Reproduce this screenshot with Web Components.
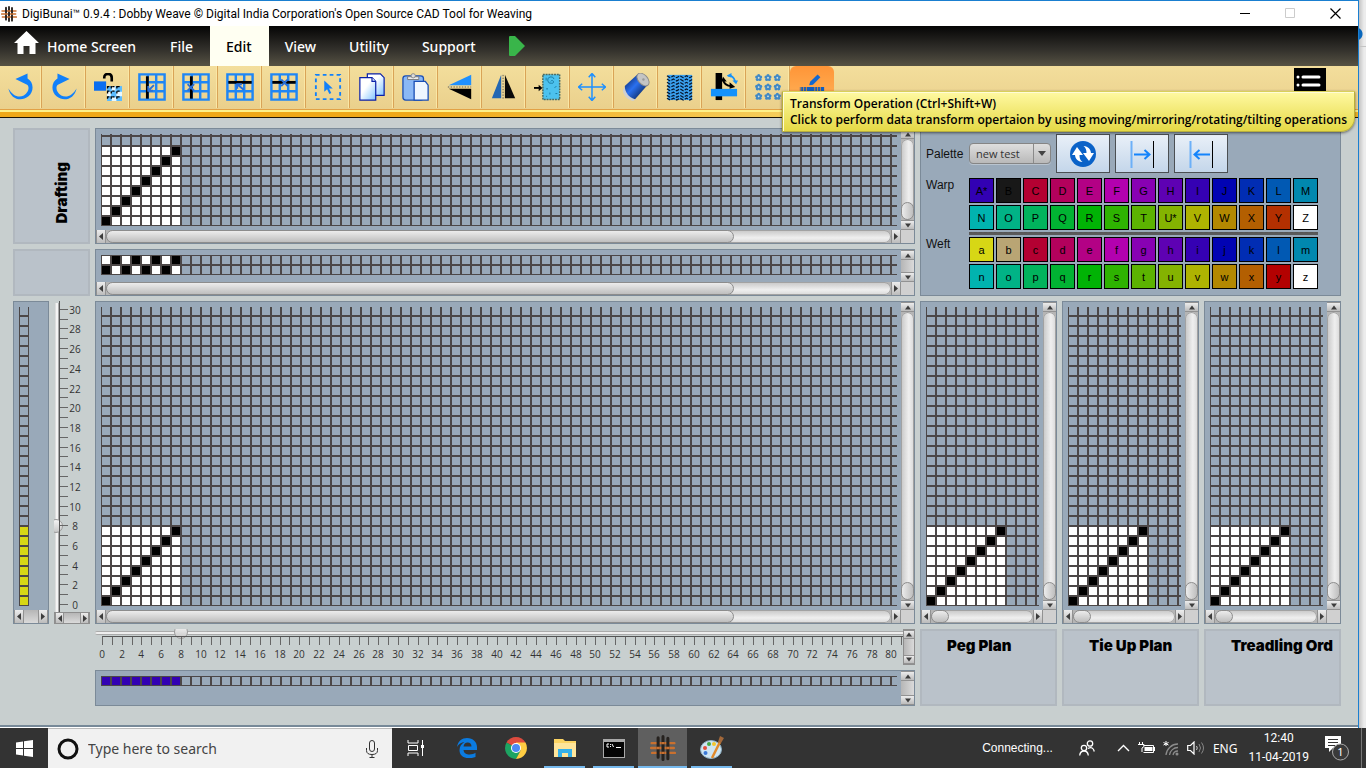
<!DOCTYPE html>
<html lang="en">
<head>
<meta charset="utf-8">
<title>DigiBunai - Dobby Weave</title>
<style>
html,body{margin:0;height:100%}
body{display:flex;flex-direction:column;min-height:100vh;overflow:hidden;background:radial-gradient(circle at calc(100% - 10px) 34px,#0a68bd 6px,transparent 7px),linear-gradient(#c4c4c4,#c4c4c4) 0 46px/100% 1px no-repeat,linear-gradient(90deg,#e8e8e8 calc(100% - 7px),#c4c4c4 calc(100% - 7px),#ececec calc(100% - 2px));font-family:"Noto Sans","Open Sans",sans-serif;color:#000}
app-window{flex:1}
</style>
</head>
<body>
<app-window></app-window>
<task-bar></task-bar>
<script>
const define = (name, html) => customElements.define(name, class extends HTMLElement {
  connectedCallback() {
    if (this.shadowRoot) return;
    const root = this.attachShadow({ mode: 'open' });
    const t = document.createElement('template');
    t.innerHTML = typeof html === 'function' ? html(this) : html;
    root.append(t.content.cloneNode(true));
  }
});

/* ---------- shared drawings ---------- */
const WEAVE = `<g fill="none" stroke-linecap="round"><path d="M1.500 7.500h21M1 12h21M2 16.500h21" stroke="#c9702f" stroke-width="2.200"/><path d="M7.500 2.500v18M12 1.500v21M16.500 3v19" stroke="#26221f" stroke-width="2.800"/><path d="M6 12h3M10.500 7.500h3M10.500 16.500h3M15 12h3" stroke="#c9702f" stroke-width="2.200" stroke-linecap="butt"/></g>`;
const hash = '<path d="M1.500 1.500h27v27h-27zM10.500 1.500v27M19.500 1.500v27M1.500 10h27M1.500 19.500h27" fill="none" stroke="#1f86f5" stroke-width="2.600"/>';
const flower = (x, y) => `<g transform="translate(${x} ${y})" fill="#4089c6"><circle cy="-2.100" r="1.700"/><circle cx="2.100" cy="-.6" r="1.700"/><circle cx="1.400" cy="2" r="1.700"/><circle cx="-1.400" cy="2" r="1.700"/><circle cx="-2.100" cy="-.6" r="1.700"/><circle r=".9" fill="#cfe0e4"/></g>`;
const chevrons = [3, 6.500, 10, 13.500, 17, 20.500, 24, 27].map(y => `M1 ${y}l3.500 2 3.500-2 3.500 2 3.500-2 3.500 2 3.500-2 3.500 2 2.500-1.500`).join('');
const arc = '<path d="M9 6.500L22 .5V6c7 4 7 14 1 19-8 6.500-19 3-21.500-8.500C6 24 12 27 18 24c6-3.500 6-10 3.500-11.500z" fill="#1180fa"/>';
const ICONS = {
  undo: arc,
  redo: `<g transform="matrix(-1 0 0 1 30 0)">${arc}</g>`,
  unlock: '<path d="M11 6V5q0-4 4-4t4 4v4" fill="none" stroke="#000" stroke-width="2.800"/><path d="M0 9h13v10H0z" fill="#0a6ef0"/><path d="M14 14h16v16H14z" fill="#5bbcff"/><path d="M19 14h4v5h-4zM24 20h6v5h-6zM14 20h4v5h-4zM19 26h5v4h-5z" fill="#e9f8ff"/><path d="M14 14.500h16M14 19.500h16M14 25.500h16M18.500 14v16M24.500 14v16M14.500 14v16" stroke="#000" stroke-width="1.400" stroke-dasharray="2.500 3" fill="none"/>',
  vin: hash + '<path d="M10 3.500v24" stroke="#000" stroke-width="3"/><path d="M17 13l-6 6M11 14v5h5" stroke="#2b6fd6" stroke-width="2" fill="none"/>',
  vdel: hash + '<path d="M10 3.500v24" stroke="#000" stroke-width="3"/><path d="M6 12l7 7M13 12l-7 7" stroke="#2b6fd6" stroke-width="2"/>',
  hin: hash + '<path d="M2.500 10h25" stroke="#000" stroke-width="3"/><path d="M19 18l-7-6M12 17v-5h5" stroke="#2b6fd6" stroke-width="2" fill="none"/>',
  hdel: hash + '<path d="M2.500 10h25" stroke="#000" stroke-width="3"/><path d="M12 7l7 7M19 7l-7 7" stroke="#2b6fd6" stroke-width="2"/>',
  select: '<path d="M2 2h26v26H2z" fill="none" stroke="#1180fa" stroke-width="2" stroke-dasharray="4 3.400"/><path d="M11 8v12l3-2.500 2.500 5 2-1-2.400-4.800h4z" fill="#1180fa"/>',
  copy: '<defs><linearGradient id="a" x2="1" y2="1"><stop offset=".4" stop-color="#fff"/><stop offset="1" stop-color="#7fc4ff"/></linearGradient></defs><g stroke="#0a1fa8" stroke-width="1.300" fill="url(#a)"><path d="M10 1h14l4 4v19H10z"/><path d="M2 5h13l4 4v20H2z"/><path d="M15 5v4h4"/></g>',
  paste: '<rect x="1" y="3" width="22" height="26" rx="3" fill="#8ab8f6" stroke="#1b4fb5" stroke-width="1.400"/><path d="M6 4h12v3H6z" fill="#eee" stroke="#777"/><circle cx="12" cy="3" r="2.300" fill="#ddd" stroke="#888"/><path d="M13 9h12l3 4v16H13z" fill="#eef6ff" stroke="#1b4fb5" stroke-width="1.400"/>',
  vmir: '<path d="M27 2v11H3z" fill="#1e90ff"/><path d="M27 28V17H3z" fill="#000"/><path d="M2 15h25" stroke="#555" stroke-dasharray="1.500 1.500"/>',
  hmir: '<path d="M12 2v25H2z" fill="#2367b3"/><path d="M16 2v25h11z" fill="#0a0a0a"/><path d="M14 2v26" stroke="#555" stroke-dasharray="1.500 1.500"/>',
  fit: '<path d="M9.500 1.500h18v27h-18z" fill="#4cc2ee" stroke="#4b6a60" stroke-width="1.600" stroke-dasharray="2 1"/><path d="M18 9a1.500 1.500 0 1 1 1 2 3.500 3.500 0 1 1 2.500-4.500M13 5v3M24 14l-2 2M13 17h2M17 21v2M23 22h2M13 25h1" stroke="#1a7aa0" fill="none"/><path d="M0 16h6" stroke="#000" stroke-width="2"/><path d="M5 12.500l4 3.500-4 3.500z"/>',
  move: '<path d="M15 0v30M0 15h30M11.500 4.500L15 .5l3.500 4M11.500 25.500l3.500 4 3.500-4M4.500 11.500L.5 15l4 3.500M25.500 11.500l4 3.500-4 3.500" fill="none" stroke="#1e90ff" stroke-width="1.600"/>',
  spool: '<defs><linearGradient id="b" x2="1" y2="1"><stop offset="0" stop-color="#051848"/><stop offset=".45" stop-color="#2a70f0"/><stop offset="1" stop-color="#020a20"/></linearGradient></defs><path d="M1 18l3-4 11 14-3 2C6 29 1 24 1 18z" fill="#d0d0d0"/><path d="M3 14L17 1l11 11-14 16C8 27 3 21 3 14z" fill="url(#b)"/><ellipse cx="22.500" cy="7" rx="5" ry="8" transform="rotate(-42 22.500 7)" fill="#c4c4c4" stroke="#8a8a8a"/><circle cx="23" cy="7" r="1.300" fill="#999"/>',
  fabric: `<path d="M2 2h26v27H2z" fill="#3aa0ee"/><path d="${chevrons}" fill="none" stroke="#06152c" stroke-width="1.300" stroke-dasharray="4 1.500"/>`,
  rotate: '<path d="M6 0h7v29H6z"/><path d="M1 17h28v8H1z" fill="#1592fb"/><path d="M14 7c1 5 5 7 9 7" fill="none" stroke="#000" stroke-width="2"/><path d="M21 10l6 5-6 2zM12 9l2-5 4 5z"/><path d="M19 3c4-1 7 2 8 6" stroke="#1592fb" stroke-width="2" fill="none"/><path d="M18 3l5-3v5zM24 8h6l-2 4z" fill="#1592fb"/>',
  pattern: [5, 15, 25].map(y => [5, 15, 25].map(x => flower(x, y)).join('')).join(''),
  transform: '<path d="M12 13l1-3.500L21 1.500l3 3-8 8z" fill="#1468d0"/><path d="M2 15h26v9H2z" fill="#125ec0"/><path d="M3 15v6M6 15v6M9 15v6M18 15v6M21 15v6M24 15v6" stroke="#e08a30"/>'
};

/* ---------- scroll bar ---------- */
define('scroll-bar', el => {
  const v = el.hasAttribute('vertical'), th = el.getAttribute('thumb');
  return `<style>
:host{display:flex;flex-direction:${v ? 'column' : 'row'};min-width:0;min-height:0;overflow:hidden;background:#b5b5b5}
:host([framed]){border:1px solid #8e8e8e}
button{flex:0 0 ${el.hasAttribute('framed') ? 9 : 10}px;margin:0;padding:0;border:solid #929292;border-width:${v ? '1px 0' : '0 1px'};background:linear-gradient(#ececec,#bcbcbc);display:flex;align-items:center;justify-content:center}
svg{display:block;flex:none}
.track{flex:1;min-width:0;min-height:0;display:flex;flex-direction:inherit;box-sizing:border-box;justify-content:${el.hasAttribute('end') ? 'flex-end' : 'flex-start'};background:linear-gradient(${v ? 90 : 180}deg,${th ? '#c6c6c6,#efefef 60%,#d8d8d8' : '#b6b6b6,#dadada'});${th ? 'box-shadow:inset 0 0 0 1px #a2a2a2;border-radius:7px' : ''}}
.thumb{flex:0 0 ${th || 0};box-sizing:border-box;border:1px solid #8c8c8c;border-radius:7px;background:linear-gradient(${v ? 90 : 180}deg,#ececec,#bebebe)}
</style><button aria-label="Scroll back"><svg width="6" height="7"><path d="${v ? 'M0 5.500h6L3 1.500z' : 'M5 0v7L1 3.500z'}" fill="#3c3c3c"/></svg></button><div class="track">${th ? '<div class="thumb"></div>' : ''}</div><button aria-label="Scroll on"><svg width="6" height="7"><path d="${v ? 'M0 1.500h6L3 5.500z' : 'M1 0v7l4-3.500z'}" fill="#3c3c3c"/></svg></button>`;
});

/* ---------- point paper grid: rows count upward from the bottom edge ---------- */
define('weave-grid', el => {
  const fill = el.getAttribute('fill'), kind = el.getAttribute('pattern');
  const cell = (c, r, col) => `<rect x="${c * 10}" y="${-(r + 1) * 10}" width="10" height="10" fill="${col}"/>`;
  let cells = '';
  const rows = { twill: 8, plain: 2, row: 1, column: 8 }[kind], cols = kind === 'column' ? 1 : 8;
  for (let r = 0; r < rows; r++) for (let c = 0; c < cols; c++)
    cells += cell(c, r, fill || ((kind === 'twill' ? r === c : (r + c) % 2 === 0) ? '#000' : '#fff'));
  const w = el.getAttribute('w'), h = el.getAttribute('h');
  return `<style>:host{display:block;overflow:hidden;width:${w ? w + 'px' : '100%'};height:${h ? h + 'px' : '100%'}}svg{display:block;width:100%;height:100%}.anchor{overflow:visible}</style>
<svg aria-hidden="true"><defs><pattern id="p" width="10" height="10" patternUnits="userSpaceOnUse"><path d="M0 0h10v1H0zM0 9h10v1H0zM0 0h1v10H0zM9 0h1v10H9z" fill="#4c4747"/></pattern></defs>
<svg class="anchor" y="100%" width="100%" height="100%">${cells}<rect y="-3000" width="100%" height="3000" fill="url(#p)"/></svg></svg>`;
});

/* ---------- sunken panel with optional scroll bars ---------- */
define('weave-panel', el => {
  const hb = el.getAttribute('hbar'), vb = el.getAttribute('vbar');
  const bar = (k, val) => `<scroll-bar ${k} ${val !== 'none' ? `thumb="${val}"` : ''}></scroll-bar>`;
  return `<style>
:host{display:grid;box-sizing:border-box;min-width:0;min-height:0;border:1px solid #7b8a98;background:#99a9b9;grid-template:minmax(0,1fr) ${hb ? '13px' : ''} / minmax(0,1fr) ${vb ? '13px' : ''}}
.view{padding:5px 4px 4px 5px;overflow:hidden;min-width:0;min-height:0}
.corner{background:#d0d0d0}
</style><div class="view"><slot></slot></div>${vb ? bar('vertical end', vb) : ''}${hb ? bar('', hb) : ''}${hb && vb ? '<div class="corner"></div>' : ''}`;
});

define('label-panel', `<style>
:host{display:block;box-sizing:border-box;min-width:0;border:2px solid #b1b8bf;background:#bac2ca;font:900 15px/24px Inter,"Liberation Sans",sans-serif;color:#000;padding:3px 0 0 25px;overflow:hidden;white-space:nowrap}
:host([turned]){display:flex;align-items:center;justify-content:center;padding:14px 0 0 20px}
:host([turned]) span{writing-mode:vertical-rl;transform:rotate(180deg)}
</style><span><slot></slot></span>`);

/* ---------- rulers with slider ---------- */
const slider = `input{appearance:none;-webkit-appearance:none;display:block;margin:0;background:none}
input::-webkit-slider-thumb{-webkit-appearance:none;width:14px;height:14px;border-radius:50%;border:1px solid #9a9a9a;background:linear-gradient(#f4f4f4,#c8c8c8)}`;
define('width-ruler', () => {
  let s = '';
  for (let i = 0; i <= 81; i++) {
    const x = Math.round(7 + i * 9.866);
    s += `<path d="M${x}.5 1v8" stroke="#666"/>`;
    if (i % 2 === 0) s += `<text x="${x}" y="22" text-anchor="middle">${i}</text>`;
  }
  return `<style>
:host{display:grid;grid-template-columns:minmax(0,1fr) 12px;overflow:hidden;height:36px}
.view{overflow:hidden;min-width:0}
${slider}
input{width:813px;height:7px}
input::-webkit-slider-runnable-track{height:4px;border-radius:3px;background:#eee;border-top:1px solid #aaa;border-bottom:1px solid #aaa}
input::-webkit-slider-thumb{margin-top:-7px}
svg{display:block;width:100%;height:28px;font:10px "Open Sans",sans-serif}
text{fill:#333}
</style><div class="view"><input type="range" min="0" max="81" value="8" aria-label="Number of ends"><svg><path d="M7 .5h2000" stroke="#555"/>${s}</svg></div><scroll-bar vertical framed></scroll-bar>`;
});
define('height-ruler', () => {
  let s = '';
  for (let i = 0; i <= 30; i++) {
    const y = Math.round(i * -9.84) - 7;
    s += `<path d="M0 ${y}.5h8" stroke="#666"/>`;
    if (i % 2 === 0) s += `<text x="15" y="${y + 4}" text-anchor="middle">${i}</text>`;
  }
  return `<style>
:host{display:grid;grid-template-rows:minmax(0,1fr) 12px;height:100%;overflow:hidden}
.view{display:flex;overflow:hidden;min-height:0;align-items:flex-end}
${slider}
input{writing-mode:vertical-lr;direction:rtl;width:5px;height:309px;flex:none}
input::-webkit-slider-runnable-track{width:4px;border-left:1px solid #ddd;border-right:1px solid #aaa;background:#f4f4f4}
input::-webkit-slider-thumb{margin-left:-7px}
svg{display:block;flex:1;height:100%;overflow:hidden;font:10px "Open Sans",sans-serif;border-left:1px solid #555}
.anchor{overflow:visible}
text{fill:#333}
</style><div class="view"><input type="range" min="0" max="30" value="8" aria-label="Number of picks"><svg><svg class="anchor" y="100%">${s}</svg></svg></div><scroll-bar framed></scroll-bar>`;
});

/* ---------- palette ---------- */
define('palette-panel', () => {
  const cols = '#3201b3 #181818 #b30132 #b3015c #b30185 #b301af #8801b3 #5e01b3 #3501b3 #0103b3 #012db3 #0159b3 #0188af #01b3af #01b386 #01b35d #01b333 #01b305 #2eb301 #5cb301 #84b301 #aeb301 #b38801 #b35f01 #b33001 #ffffff'.split(' ');
  const weft = cols.slice(); weft[0] = '#d7d715'; weft[1] = '#b9a574'; weft[24] = '#b30101';
  const set = (list, base) => list.map((c, i) => {
    const ch = String.fromCharCode(base + i);
    return `<button style="background:${c}">${ch}${base === 65 && (i === 0 || i === 20) ? '*' : ''}</button>`;
  }).join('');
  return `<style>
:host{display:grid;box-sizing:border-box;grid-template-columns:38px 349px;column-gap:5px;align-content:start;padding:5px;border:1px solid #7b8a98;background:#99a9b9;font:12px/14px "Liberation Sans",Arial,sans-serif;color:#111}
label,.name{align-self:start}
label{padding-top:13px}
.tools{display:flex;gap:5px;height:39px;margin-bottom:5px}
select{appearance:none;-webkit-appearance:none;box-sizing:border-box;width:82px;height:21px;margin:9px 0 0;padding:1px 0 0 6px;border:1px solid #858585;border-radius:4px;font:11px/18px "Open Sans",sans-serif;color:#333;box-shadow:0 1px #b9c4cf;background:url('data:image/svg+xml,<svg xmlns="http://www.w3.org/2000/svg" width="17" height="19"><path d="M.5 0v19" stroke="%238a8a8a"/><path d="M5 7h8l-4 5z" fill="%23444"/></svg>') right center no-repeat,linear-gradient(#dedede,#b9b9b9)}
.tools button{box-sizing:border-box;width:54px;height:39px;padding:0;border:1px solid #4b4f53;background:linear-gradient(#e9f0f8,#c4d6ea);display:flex;align-items:center;justify-content:center}
.set{display:grid;grid-template-columns:repeat(13,25px);gap:2px}
.set button{box-sizing:border-box;height:25px;padding:0;border:1px solid #000;font:11px/12px "Liberation Sans",Arial,sans-serif;color:#000}
.line{grid-column:2;height:2px;margin:2px 0;border-top:1px dashed #555;background:#5a5a5a}
</style>
<label for="pal">Palette</label><div class="tools"><select id="pal"><option>new test</option></select>
<button aria-label="Swap palettes"><svg width="28" height="28"><circle cx="14" cy="14" r="13" fill="#0a62c8"/><path d="M3 15l5-8 6 8h-3.500c0 3 .5 5 3 7-5-.5-7-3-7.500-7zM25 13l-5 8-6-8h3.500c0-3-.5-5-3-7 5 .5 7 3 7.500 7z" fill="#fff"/></svg></button>
<button aria-label="Warp to weft"><svg width="26" height="28"><path d="M2.500 1v27" stroke="#6cb0f8" stroke-width="2"/><path d="M24.500 1v27" stroke="#000"/><path d="M5 14.500h15M15.500 10l5 4.500-5 4.500" fill="none" stroke="#1484fb" stroke-width="2"/></svg></button>
<button aria-label="Weft to warp"><svg width="26" height="28"><path d="M2.500 1v27" stroke="#6cb0f8" stroke-width="2"/><path d="M24.500 1v27" stroke="#000"/><path d="M22 14.500H7M11.500 10l-5 4.500 5 4.500" fill="none" stroke="#1484fb" stroke-width="2"/></svg></button></div>
<span class="name">Warp</span><div class="set">${set(cols, 65)}</div><div class="line"></div><span class="name">Weft</span><div class="set">${set(weft, 97)}</div>`;
});

/* ---------- tool bar ---------- */
define('tool-button', el => `<style>
:host{display:block;width:44px;flex:none}
:host(:first-child){width:42px}
button{box-sizing:border-box;width:100%;height:42px;margin:0;padding:0;border:0;border-right:1px solid #d9a457;box-shadow:inset -1px 0 #fae7a5;background:none;display:flex;align-items:center;justify-content:center}
:host([active]) button{border:0;border-radius:6px 6px 0 0;box-shadow:none;background:linear-gradient(#ff9537,#ffa94e 60%,#ffd070)}
svg{display:block}
</style><button aria-label="${el.getAttribute('label')}"><svg width="28" height="28" viewBox="0 0 30 30">${ICONS[el.getAttribute('icon')]}</svg></button>`);

define('hover-tip', `<style>
:host{display:block;box-sizing:border-box;padding:4px 7px 3px;border:1px solid #b9b03c;border-top-color:#d9d05a;border-radius:1px 1px 14px 1px;background:linear-gradient(#fff9a2,#e5d946);box-shadow:inset 1px 1px #fffcd8,0 1px 3px #0008;font:600 12px/16px "Open Sans",sans-serif;white-space:nowrap}
</style><slot></slot>`);

/* ---------- application window ---------- */
const tools = [['undo','Undo'],['redo','Redo'],['unlock','Unlock'],['vin','Insert warp'],['vdel','Delete warp'],['hin','Insert weft'],['hdel','Delete weft'],['select','Select'],['copy','Copy'],['paste','Paste'],['vmir','Mirror vertical'],['hmir','Mirror horizontal'],['fit','Fill'],['move','Move'],['spool','Yarn'],['fabric','Fabric'],['rotate','Rotate'],['pattern','Repeat'],['transform','Transform']];
define('app-window', () => `<style>
:host{display:flex;flex-direction:column;position:relative;min-height:0;margin-right:7px;border-top:1px solid #1a7fd0;border-right:1px solid #1a7fd0;background:#c8cfcf}
header{display:flex;align-items:center;height:25px;flex:none;background:#fff;font:12px Roboto,"Open Sans",sans-serif;padding-left:1px;white-space:nowrap}
header>svg{margin-right:5px}
header .win{display:flex;margin-left:auto}
header button{width:45px;height:25px;padding:0;border:0;background:none;display:flex;align-items:center;justify-content:center}
nav{display:flex;height:40px;flex:none;background:linear-gradient(#050505,#33312c 60%,#565243);padding-left:14px}
nav a{display:flex;align-items:center;padding:0 17px 0 16px;color:#fff;text-decoration:none;font-size:14px;font-weight:500}
nav a:first-child{padding:0 18px 0 0;gap:8px}
nav a:first-child svg{margin-bottom:8px}
nav a.on{background:#fffff2;color:#000}
.tools{display:flex;height:43px;flex:none;background:linear-gradient(#f3de9c,#ead08c)}
.tools .menu{width:32px;height:32px;margin:2px 32px 0 auto;padding:0;border:0;background:#000}
.stripe{height:9px;flex:none;box-sizing:border-box;border-top:1px solid #e2a145;border-bottom:1px solid #1c1405;background:linear-gradient(#fdf08a 2px,transparent 2px),linear-gradient(90deg,#f0a818,#f0a818 30%,#f6d060 60%,#f0b428)}
hover-tip{position:absolute;top:90px;right:3px;z-index:2}
main{flex:1;min-height:0;display:grid;grid-template:116px 47px minmax(0,1fr) 77px / 77px minmax(0,1fr) 421px;gap:5px;padding:10px 17px 19px 13px;border-bottom:2px solid #778998;box-shadow:0 1px #fff;margin-bottom:1px}
palette-panel{grid-column:3;grid-row:1/3}
.split{display:grid;grid-template-columns:minmax(0,1fr) minmax(0,1fr);gap:5px;min-height:0}
.stack{display:grid;grid-template-rows:36px 36px;gap:5px;min-width:0}
.thirds{display:grid;grid-template-columns:repeat(3,minmax(0,1fr));gap:5px;min-height:0}
</style>
<header><svg width="16" height="16" viewBox="0 0 24 24">${WEAVE}</svg><span>DigiBunai™ 0.9.4 : Dobby Weave © Digital India Corporation's Open Source CAD Tool for Weaving</span>
<div class="win"><button aria-label="Minimize"><svg width="11" height="11"><path d="M0 5.500h10" stroke="#000"/></svg></button><button aria-label="Maximize"><svg width="11" height="11"><path d="M.5.5h9v9h-9z" fill="none" stroke="#ccc"/></svg></button><button aria-label="Close"><svg width="11" height="11"><path d="M.5.5l10 10M10.500.5l-10 10" stroke="#000" stroke-width="1.200"/></svg></button></div></header>
<nav><a href="#home"><svg width="25" height="23"><path d="M12.500 0L25 12h-3.500v11h-6v-8h-6v8h-6V12H0z" fill="#fff"/></svg>Home Screen</a><a href="#file">File</a><a href="#edit" class="on">Edit</a><a href="#view">View</a><a href="#utility">Utility</a><a href="#support">Support</a><a href="#run" aria-label="Run"><svg width="17" height="20"><path d="M0 1q0-1 1-1h5l10 10L6 20H1q-1 0-1-1z" fill="#39b54a"/></svg></a></nav>
<div class="tools">${tools.map(t => `<tool-button icon="${t[0]}" label="${t[1]}" ${t[0] === 'transform' ? 'active' : ''}></tool-button>`).join('')}<button class="menu" aria-label="Menu"><svg width="32" height="32"><path d="M9 9h16M9 17h16M9 25h16" stroke="#fff" stroke-width="3" stroke-linecap="round"/><circle cx="4" cy="9" r="1.500" fill="#fff"/><circle cx="4" cy="17" r="1.500" fill="#fff"/><circle cx="4" cy="25" r="1.500" fill="#fff"/></svg></button></div>
<div class="stripe"></div>
<hover-tip>Transform Operation (Ctrl+Shift+W)<br>Click to perform data transform opertaion by using moving/mirroring/rotating/tilting operations</hover-tip>
<main>
<label-panel turned>Drafting</label-panel>
<weave-panel hbar="80%" vbar="18px"><weave-grid pattern="twill"></weave-grid></weave-panel>
<palette-panel></palette-panel>
<label-panel></label-panel>
<weave-panel hbar="80%" vbar="none"><weave-grid pattern="plain" h="20"></weave-grid></weave-panel>
<div class="split"><weave-panel hbar="none"><weave-grid pattern="column" fill="#d7d715" w="10"></weave-grid></weave-panel><height-ruler></height-ruler></div>
<weave-panel hbar="80%" vbar="18px"><weave-grid pattern="twill"></weave-grid></weave-panel>
<div class="thirds">${'<weave-panel hbar="18px" vbar="18px"><weave-grid pattern="twill"></weave-grid></weave-panel>'.repeat(3)}</div>
<div></div>
<div class="stack"><width-ruler></width-ruler><weave-panel vbar="none"><weave-grid pattern="row" fill="#3201b3" h="10"></weave-grid></weave-panel></div>
<div class="thirds"><label-panel>Peg Plan</label-panel><label-panel>Tie Up Plan</label-panel><label-panel>Treadling Ord</label-panel></div>
</main>`);

/* ---------- task bar ---------- */
define('task-bar', `<style>
:host{display:flex;height:40px;flex:none;background:#333;color:#fff;font-size:12px}
button{box-sizing:border-box;margin:0;padding:0;border:0;background:none;color:inherit;font:inherit;display:flex;align-items:center;justify-content:center}
.start,.app{width:48px}
.app{width:49px;padding:0 4px}
.app.view{width:50px;padding:0 6px 0 4px}
.app span{display:flex;width:100%;height:40px;box-sizing:border-box;align-items:center;justify-content:center}
.app.open span{border-bottom:2px solid #76b9ed;padding-top:2px}
.app.on{padding:0}
.app.on span{background:#5f5f5f}
label{display:flex;align-items:center;width:344px;box-sizing:border-box;padding:0 13px 0 9px;background:#f1f1f1;border-top:1px solid #bbb;gap:9px}
input{flex:1;min-width:0;border:0;padding:0;background:none;font:14px "Noto Sans","Open Sans",sans-serif;color:#444}
input::placeholder{color:#444;opacity:1}
.tray{margin-left:auto;display:flex;align-items:center}
.net{font:12px "Liberation Sans",Arial,sans-serif;margin-right:26px}
.tray svg{margin-right:8px}
.tray .people{margin-right:22px}
.clock{text-align:center;font:12px/19px Roboto,sans-serif;margin:0 15px 0 11px}
.tray .note{margin:0 11px 0 0}
.edge{width:1px;height:40px;background:#777;margin-right:4px}
</style>
<button class="start" aria-label="Start"><svg width="17" height="17"><path d="M0 2.500L7 1.500V8H0zM8 1.300L17 0v8H8zM0 9h7v6.500L0 14.500zM8 9h9v8L8 15.700z" fill="#fff"/></svg></button>
<label><svg width="22" height="22"><circle cx="11" cy="11" r="9" fill="none" stroke="#111" stroke-width="3"/></svg><input aria-label="Search" placeholder="Type here to search"><svg width="14" height="18"><rect x="4.500" y=".5" width="5" height="11" rx="2.500" fill="none" stroke="#333"/><path d="M1.500 8v2.500q0 4 5.500 4t5.500-4V8M7 14.500V17M4.500 17.500h5" fill="none" stroke="#333"/></svg></label>
<button class="app view" aria-label="Task view"><span><svg width="18" height="16"><path d="M1 0v3h10V0M1 16v-3h10v3M1.500 5.500h9v5h-9zM15.500 0v16" fill="none" stroke="#fff"/><path d="M14 5h3v3h-3z" fill="#fff"/></svg></span></button>
<button class="app" aria-label="Edge"><span><svg width="20" height="20" viewBox="0 0 20 20"><path d="M0 9C1 3 5 0 10 0c6 0 10 4 10 9v3H6.500c.5 3.500 3 4.500 6 4.500 2.500 0 4.500-.7 6-1.700V19c-2 .8-4 1.200-6.500 1.200C6 20.200 2.500 17 2.500 12c0-3.500 2-6.500 5-8C4.500 4.300 1.500 6 0 9zm6.500-.5h8C14.500 6 13 4.500 10.700 4.500 8.300 4.500 7 6 6.500 8.500z" fill="#0b7be0"/></svg></span></button>
<button class="app" aria-label="Chrome"><span><svg width="22" height="22" viewBox="0 0 22 22"><path d="M11 11L1.500 5.500A11 11 0 0 1 20.500 5.500z" fill="#dd4b3e"/><path d="M11 11L1.500 5.500A11 11 0 0 0 11 22l4.500-8z" fill="#1da462"/><path d="M11 11l4.600 2.600L11 22A11 11 0 0 0 20.500 5.500H11z" fill="#ffcd42"/><circle cx="11" cy="11" r="5" fill="#fff"/><circle cx="11" cy="11" r="4" fill="#4a8af4"/></svg></span></button>
<button class="app open" aria-label="File Explorer"><span><svg width="22" height="19"><path d="M0 0h9l2 2h11v16H0z" fill="#fcd462"/><path d="M0 4h22v14H0z" fill="#ffe59a"/><path d="M4 18v-8h14v8h-4v-4H8v4z" fill="#35b1ea"/></svg></span></button>
<button class="app open" aria-label="Command prompt"><span><svg width="22" height="19"><path d="M0 0h22v19H0z" fill="#aaa"/><path d="M1 3h20v15H1z" fill="#050505"/><path d="M6 5H4v3h2M7.500 5v1M7.500 7v1M9 5l1.500 3M13 8.500h5" fill="none" stroke="#fff"/></svg></span></button>
<button class="app open on" aria-label="DigiBunai"><span><svg width="26" height="26" viewBox="0 0 24 24">${WEAVE}</svg></span></button>
<button class="app open" aria-label="Paint"><span><svg width="24" height="24"><ellipse cx="11" cy="13.500" rx="10.500" ry="9" fill="#cfe6f3" stroke="#8fb2c6"/><circle cx="5" cy="12" r="2" fill="#e0503c"/><circle cx="9" cy="8" r="2" fill="#42a847"/><circle cx="14" cy="8" r="2" fill="#f4c62d"/><circle cx="5.500" cy="17" r="2" fill="#3a78d6"/><path d="M12 22L20 6" stroke="#e08a2c" stroke-width="2.500"/><path d="M18 6l2-6 4 2-3 5z" fill="#a3683a"/></svg></span></button>
<div class="tray"><span class="net">Connecting...</span>
<svg class="people" width="16" height="16"><g fill="none" stroke="#fff" stroke-width="1.300"><circle cx="11" cy="3.500" r="2.700"/><circle cx="5" cy="8" r="2.700"/><path d="M.7 15.500q.5-4.500 4.300-4.500t4.300 4.500M9 8.500q5-2.500 6.300 3"/></g></svg>
<svg width="13" height="8"><path d="M1 7l5.500-5.500L12 7" fill="none" stroke="#fff" stroke-width="1.400"/></svg>
<svg width="17" height="12"><path d="M5.500 3.500h10v7h-10" fill="none" stroke="#fff"/><path d="M6.500 5h8v4h-8zM16 5h1v4h-1z" fill="#fff"/><path d="M1.500 0v2M4.500 0v2M0 2.500h6v2L4 6v4" stroke="#fff" fill="none"/></svg>
<svg width="16" height="16"><path d="M3 15A12 12 0 0 1 15 4M6.500 15A8.500 8.500 0 0 1 15 7.500M10 15a5 5 0 0 1 5-4" fill="none" stroke="#8c8c8c" stroke-width="1.300"/><circle cx="14" cy="14" r="1.500" fill="#8c8c8c"/><path d="M3 1v5M.5 2.500l5 2.500M5.500 2.500l-5 2.500" stroke="#fff"/></svg>
<svg width="18" height="14"><path d="M.7 4.500h2.800L7 1v12L3.500 9.500H.7z" fill="none" stroke="#fff" stroke-width="1.200"/><path d="M9.500 5q1.500 2 0 4" fill="none" stroke="#ccc"/><path d="M12 3q3 4 0 8M14.500 1.500q4 5.500 0 11" fill="none" stroke="#888"/></svg>
<span>ENG</span><div class="clock">12:40<br>11-04-2019</div>
<svg class="note" width="26" height="26"><path d="M1 1h16v12H9l-4 4v-4H1z" fill="#fff"/><path d="M4 4.500h10M4 7.500h10M4 10.500h7" stroke="#333"/><circle cx="16.500" cy="17" r="8" fill="#3a3a3a" stroke="#aaa"/><text x="16.500" y="21" font-size="11" text-anchor="middle" fill="#fff">1</text></svg><div class="edge"></div></div>`);
</script>
</body>
</html>
